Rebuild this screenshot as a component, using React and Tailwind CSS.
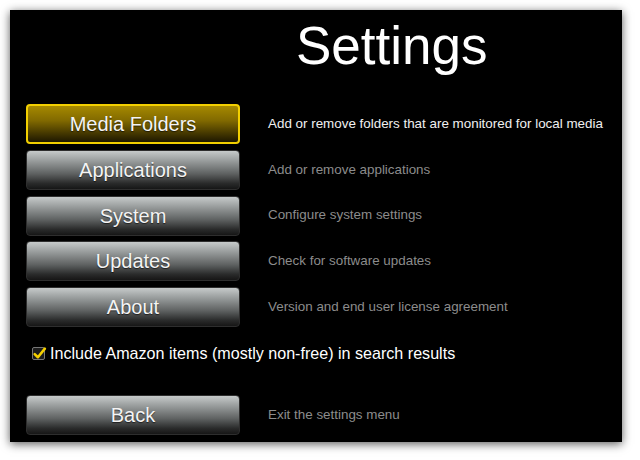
import React from 'react';

const ITEMS = [
  { label: 'Media Folders', desc: 'Add or remove folders that are monitored for local media', active: true },
  { label: 'Applications', desc: 'Add or remove applications' },
  { label: 'System', desc: 'Configure system settings' },
  { label: 'Updates', desc: 'Check for software updates' },
  { label: 'About', desc: 'Version and end user license agreement' },
];

const MenuButton = ({ label, active }) => (
  <button
    className={`w-[214px] h-[40px] shrink-0 rounded-[4px] text-[20px] leading-none text-[#f4f4f4] [text-shadow:0_1px_1px_rgba(0,0,0,0.6)] ${
      active
        ? 'border-2 border-[#f2cf00] bg-[linear-gradient(to_bottom,#a68900_0%,#826a00_40%,#3e3200_80%,#1e1800_100%)]'
        : 'border border-[#2e2e2e] bg-[linear-gradient(to_bottom,#c6caca_0%,#9a9e9e_25%,#5e6161_60%,#2a2b2b_85%,#161616_100%)]'
    }`}
  >
    {label}
  </button>
);

const Row = ({ label, desc, active }) => (
  <div className="flex items-center">
    <MenuButton label={label} active={active} />
    <span className={`ml-[28px] text-[13.4px] ${active ? 'text-[#f0f0f0]' : 'text-[#8c8c8c]'}`}>{desc}</span>
  </div>
);

export default function App() {
  return (
    <div className="w-[640px] h-[460px] bg-white p-[10px] font-['Liberation_Sans',Arial,sans-serif]">
      <div className="w-[612px] h-[432px] bg-black shadow-[0_2px_9px_rgba(0,0,0,0.65)] pl-[16px] pt-[6px]">
        <h1 className="pl-[270px] text-[53px] leading-[60px] text-white">Settings</h1>

        <div className="mt-[28px] flex flex-col gap-[5.75px]">
          {ITEMS.map((item) => (
            <Row key={item.label} {...item} />
          ))}
        </div>

        <label className="mt-[14px] ml-[6px] flex items-center gap-[5px] text-[16.1px] text-white">
          <span className="w-[13px] h-[13px] rounded-[2px] border border-[#777] bg-[#1c1c1c] relative">
            <svg viewBox="0 0 14 14" className="absolute -left-[1px] -top-[2px] w-[15px] h-[15px]">
              <path d="M2.5 7.5 L5.5 10.5 L12 2.5" fill="none" stroke="#f5d000" strokeWidth="2.4" strokeLinecap="round" strokeLinejoin="round" />
            </svg>
          </span>
          Include Amazon items (mostly non-free) in search results
        </label>

        <div className="mt-[30px]">
          <Row label="Back" desc="Exit the settings menu" />
        </div>
      </div>
    </div>
  );
}
